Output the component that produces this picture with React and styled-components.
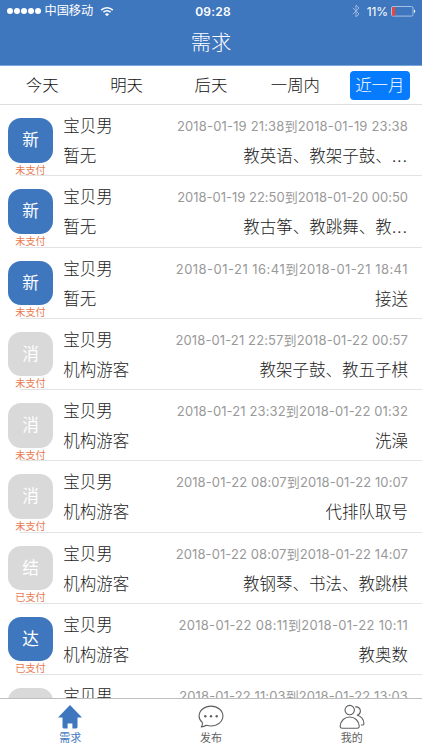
import React from "react";
import styled, { createGlobalStyle } from "styled-components";

const GlobalStyle = createGlobalStyle`
  * {
    box-sizing: border-box;
  }
  body {
    margin: 0;
    background: #fff;
    font-family: Inter, "Noto Sans CJK SC", sans-serif;
    color: #1c1c1c;
  }
`;

const Screen = styled.div`
  width: 422px;
  height: 750px;
  display: flex;
  flex-direction: column;
  overflow: hidden;
  background: #fff;
`;

const Header = styled.header`
  flex: none;
  height: 66px;
  background: #3f77be;
  border-bottom: 1px solid #7ba6dc;
  color: #fff;
`;

const StatusBar = styled.div`
  height: 22px;
  padding: 0 6px 0 7px;
  display: grid;
  grid-template-columns: 1fr auto 1fr;
  align-items: center;
`;

const StatusGroup = styled.div`
  display: flex;
  align-items: center;
  justify-content: ${({ $end }) => ($end ? "flex-end" : "flex-start")};
`;

const Signal = styled.div`
  display: flex;
  gap: 1px;
  margin-right: 3.5px;
`;

const Dot = styled.span`
  width: 6px;
  height: 6px;
  border-radius: 50%;
  background: #fff;
`;

const Carrier = styled.span`
  font-size: 12.2px;
  line-height: 22px;
  margin-right: 7px;
`;

const Clock = styled.span`
  font-size: 12px;
  font-weight: 600;
  letter-spacing: 0.2px;
  padding-left: 3px;
`;

const Percent = styled.span`
  font-size: 12px;
  letter-spacing: -0.1px;
  margin: 0 3px 0 7px;
`;

const Title = styled.h1`
  margin: 0;
  height: 42px;
  font-size: 20.3px;
  font-weight: 300;
  line-height: 42px;
  text-align: center;
`;

const Tabs = styled.nav`
  flex: none;
  height: 39px;
  display: grid;
  grid-template-columns: repeat(5, 1fr);
  align-items: center;
  justify-items: center;
  border-bottom: 1px solid #dedfe2;
`;

const Tab = styled.button`
  width: 60px;
  height: 29px;
  padding: 0;
  border: 0;
  border-radius: 4px;
  font: inherit;
  font-size: 16.4px;
  font-weight: 300;
  line-height: 28px;
  white-space: nowrap;
  background: ${({ $active }) => ($active ? "#067bfd" : "transparent")};
  color: ${({ $active }) => ($active ? "#fff" : "#111")};
`;

const List = styled.main`
  flex: 1;
  min-height: 0;
  overflow: hidden;
`;

const Row = styled.div`
  height: 71.25px;
  padding: 13px 14px 0 8px;
  display: flex;
  background: linear-gradient(#e3e3e4, #e3e3e4) 20px 100% / 100% 1px no-repeat;
`;

const Side = styled.div`
  width: 45px;
  flex: none;
  display: flex;
  flex-direction: column;
  align-items: center;
`;

const Avatar = styled.div`
  width: 45px;
  height: 44.5px;
  flex: none;
  border-radius: 13px;
  background: ${({ $muted }) => ($muted ? "#d9d9d9" : "#3f77be")};
  color: #fff;
  font-size: 16.6px;
  line-height: 44px;
  text-align: center;
`;

const Payment = styled.span`
  font-size: 10.1px;
  line-height: 14px;
  color: #e8794f;
`;

const Info = styled.div`
  flex: 1;
  min-width: 0;
  margin-left: 10.3px;
`;

const Line = styled.div`
  height: 30px;
  margin-top: ${({ $first }) => ($first ? "-7px" : "0")};
  display: flex;
  align-items: center;
  justify-content: space-between;
  font-size: 16.5px;
  font-weight: 300;
  line-height: 30px;
  white-space: nowrap;
`;

const Period = styled.span`
  font-size: 13px;
  font-weight: 400;
  letter-spacing: ${({ $tracking }) => 0.12 + $tracking}px;
  color: #999;
`;

const Dots = styled.span`
  letter-spacing: 0.8px;
`;

const TabBar = styled.footer`
  flex: none;
  height: 52px;
  display: grid;
  grid-template-columns: repeat(3, 1fr);
  border-top: 1px solid #bebebe;
  background: #fff;
`;

const TabItem = styled.div`
  display: flex;
  flex-direction: column;
  align-items: center;
  padding-top: 5px;
  font-size: 11px;
  line-height: 15px;
  color: ${({ $active }) => ($active ? "#3f77be" : "#606060")};

  svg {
    display: block;
    margin-bottom: 1px;
  }
`;

const WifiIcon = () => (
  <svg width="14" height="11" viewBox="0 0 14 11" fill="none" stroke="#fff">
    <path d="M1.2 4.1a8.3 8.3 0 0 1 11.6 0" strokeWidth="1.6" />
    <path d="M3.4 6.3a5.1 5.1 0 0 1 7.2 0" strokeWidth="1.6" />
    <path d="M7 10.2 5 8.2a2.8 2.8 0 0 1 4 0z" fill="#fff" stroke="none" />
  </svg>
);

const BluetoothIcon = () => (
  <svg
    width="8"
    height="14"
    viewBox="0 0 8 14"
    fill="none"
    stroke="#9bb9e0"
    strokeWidth="1"
  >
    <path d="M.8 3.8 7 10 4 12.9V1.1L7 4 .8 10.2" />
  </svg>
);

const BatteryIcon = () => (
  <svg width="25" height="11" viewBox="0 0 25 11">
    <rect x=".5" y=".5" width="21.5" height="9.6" rx="1.5" fill="none" stroke="#a5c0e4" />
    <path d="M1 1h3v8.6H1z" fill="#f04439" />
    <path d="M23 3.6c1.7.4 1.7 3 0 3.4z" fill="#fff" />
  </svg>
);

const HomeIcon = () => (
  <svg width="26" height="26" viewBox="0 0 26 26" fill="currentColor">
    <path d="M13 1 1 13.6h4.500v9.500q0 1.300 1.300 1.300h3.800v-5h4.800v5h3.800q1.300 0 1.300-1.300v-9.500H25z" />
  </svg>
);

const ChatIcon = () => (
  <svg width="26" height="26" viewBox="0 0 26 26" fill="none" stroke="currentColor">
    <path
      d="M13 2.1c6.6 0 11.9 4.4 11.9 10S19.6 22 13 22c-1.7 0-3.3-.3-4.7-.8-1.3.9-2.8 1.5-5 1.7.9-1.2 1.3-2.5 1.1-4.2C2.4 16.9 1.1 14.7 1.1 12.1c0-5.6 5.3-10 11.9-10z"
      strokeWidth="1.1"
      strokeLinejoin="round"
    />
    <g fill="currentColor" stroke="none">
      <circle cx="7.3" cy="12.3" r="1.2" />
      <circle cx="13" cy="12.3" r="1.2" />
      <circle cx="18.7" cy="12.3" r="1.2" />
    </g>
  </svg>
);

const UsersIcon = () => (
  <svg
    width="26"
    height="26"
    viewBox="0 0 26 26"
    fill="none"
    stroke="currentColor"
    strokeWidth="1.1"
    strokeLinecap="round"
    strokeLinejoin="round"
  >
    <circle cx="10.7" cy="6.1" r="4.7" />
    <path d="M3.2 24.3Q1 24.3 1.2 21.8C1.7 16.7 5.6 13 10.7 13s9 3.7 9.5 8.8q.2 2.5-2 2.5z" />
    <path d="M16.6 2.9c2.9-.2 4.8 1.8 4.8 4.2 0 2-1.2 3.5-3.1 4.2 3.9 1.1 6.3 4.3 6.6 7.9q.1 1.8-1.7 1.8h-.8" />
  </svg>
);

const tabs = ["今天", "明天", "后天", "一周内", "近一月"];

const demands = [
  { mark: "新", pay: "未支付", place: "暂无", start: "2018-01-19 21:38", end: "2018-01-19 23:38", service: "教英语、教架子鼓、", more: true, tracking: 0.045 },
  { mark: "新", pay: "未支付", place: "暂无", start: "2018-01-19 22:50", end: "2018-01-20 00:50", service: "教古筝、教跳舞、教", more: true, tracking: -0.13 },
  { mark: "新", pay: "未支付", place: "暂无", start: "2018-01-21 16:41", end: "2018-01-21 18:41", service: "接送", tracking: 0.35 },
  { mark: "消", pay: "未支付", place: "机构游客", start: "2018-01-21 22:57", end: "2018-01-22 00:57", service: "教架子鼓、教五子棋", muted: true },
  { mark: "消", pay: "未支付", place: "机构游客", start: "2018-01-21 23:32", end: "2018-01-22 01:32", service: "洗澡", muted: true },
  { mark: "消", pay: "未支付", place: "机构游客", start: "2018-01-22 08:07", end: "2018-01-22 10:07", service: "代排队取号", muted: true, tracking: -0.02 },
  { mark: "结", pay: "已支付", place: "机构游客", start: "2018-01-22 08:07", end: "2018-01-22 14:07", service: "教钢琴、书法、教跳棋", muted: true, tracking: -0.02 },
  { mark: "达", pay: "已支付", place: "机构游客", start: "2018-01-22 08:11", end: "2018-01-22 10:11", service: "教奥数", tracking: 0.19 },
  { start: "2018-01-22 11:03", end: "2018-01-22 13:03", muted: true },
];

const DemandRow = ({ mark, pay, place, start, end, service, more, muted, tracking = 0 }) => (
  <Row>
    <Side>
      <Avatar $muted={muted}>{mark}</Avatar>
      <Payment>{pay}</Payment>
    </Side>
    <Info>
      <Line $first>
        <span>宝贝男</span>
        <Period $tracking={tracking}>
          {start}到{end}
        </Period>
      </Line>
      <Line>
        <span>{place}</span>
        <span>
          {service}
          {more && <Dots>...</Dots>}
        </span>
      </Line>
    </Info>
  </Row>
);

const App = () => {
  return (
    <>
      <GlobalStyle />
      <Screen>
        <Header>
          <StatusBar>
            <StatusGroup>
              <Signal>
                {[0, 1, 2, 3, 4].map((n) => (
                  <Dot key={n} />
                ))}
              </Signal>
              <Carrier>中国移动</Carrier>
              <WifiIcon />
            </StatusGroup>
            <Clock>09:28</Clock>
            <StatusGroup $end>
              <BluetoothIcon />
              <Percent>11%</Percent>
              <BatteryIcon />
            </StatusGroup>
          </StatusBar>
          <Title>需求</Title>
        </Header>
        <Tabs>
          {tabs.map((tab) => (
            <Tab key={tab} $active={tab === "近一月"}>
              {tab}
            </Tab>
          ))}
        </Tabs>
        <List>
          {demands.map((demand, index) => (
            <DemandRow key={index} {...demand} />
          ))}
        </List>
        <TabBar>
          <TabItem $active>
            <HomeIcon />
            需求
          </TabItem>
          <TabItem>
            <ChatIcon />
            发布
          </TabItem>
          <TabItem>
            <UsersIcon />
            我的
          </TabItem>
        </TabBar>
      </Screen>
    </>
  );
};

export default App;
